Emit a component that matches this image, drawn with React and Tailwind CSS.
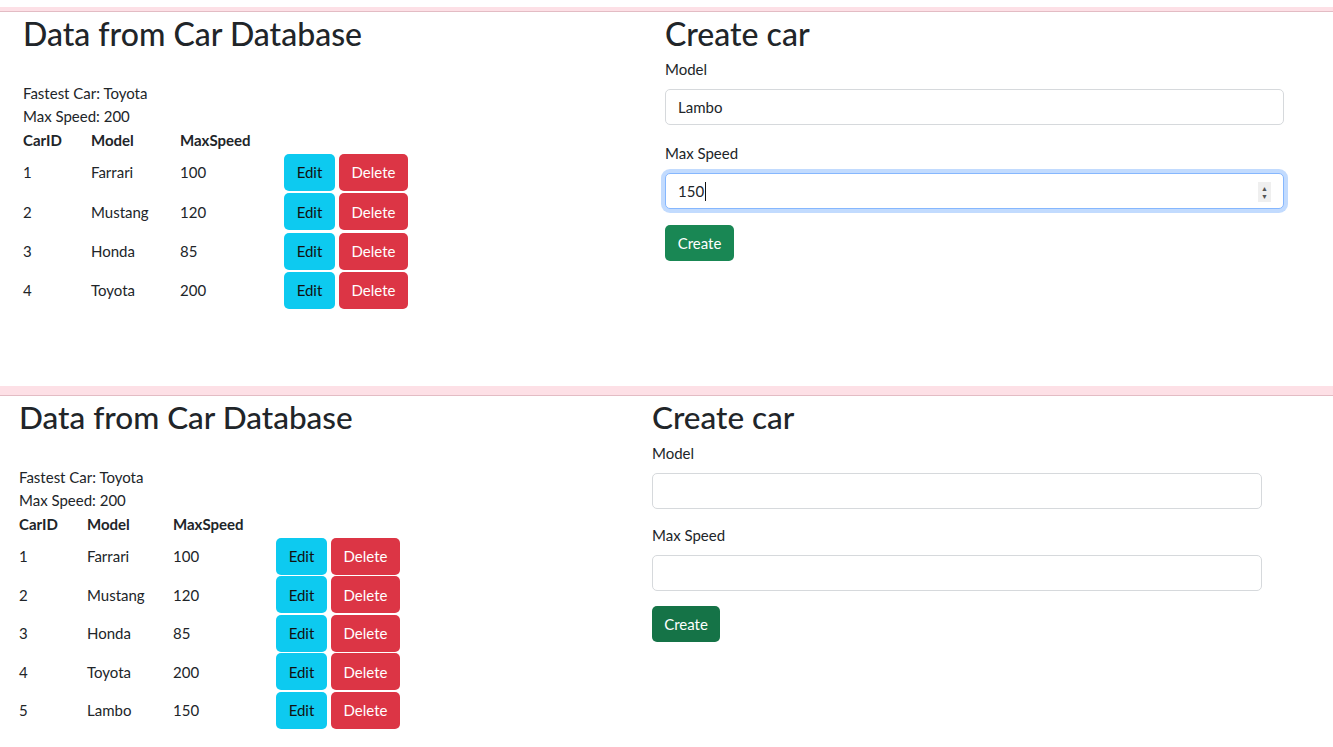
import React from "react";

const FONT = "font-['Lato','Liberation_Sans',sans-serif]";

const baseCars = [
  { id: 1, model: "Farrari", maxSpeed: 100 },
  { id: 2, model: "Mustang", maxSpeed: 120 },
  { id: 3, model: "Honda", maxSpeed: 85 },
  { id: 4, model: "Toyota", maxSpeed: 200 },
];

const layouts = {
  before: {
    section: "h-[386px] pt-[7px]",
    band: "h-[5px]",
    left: "w-[665px] pl-[23px]",
    right: "w-[620px]",
    title: "text-[32px]",
    cols: "grid-cols-[68px_89px_104px_auto]",
    row: "h-[39.3px]",
    fields: "gap-[17px]",
    input: "w-[619px]",
    create: "bg-[#198754] w-[69px] mt-[16px]",
  },
  after: {
    section: "h-[361px] pt-0",
    band: "h-[10px]",
    left: "w-[652px] pl-[19px]",
    right: "w-[611px]",
    title: "text-[31.5px]",
    cols: "grid-cols-[68px_86px_103px_auto]",
    row: "h-[38.5px]",
    fields: "gap-[15px]",
    input: "w-[610px]",
    create: "bg-[#157347] w-[68px] mt-[15px]",
  },
};

function Field({ label, value, focused, className }) {
  return (
    <div>
      <label className="block text-[15px] leading-[23px] text-[#212529]">{label}</label>
      {focused ? (
        <div
          className={`relative mt-[8px] h-[36px] rounded-[5px] border border-[#86b7fe] bg-white px-[12px] flex items-center text-[15px] text-[#212529] shadow-[0_0_0_4px_rgba(13,110,253,0.25)] ${className}`}
        >
          <span>{value}</span>
          <span className="ml-px inline-block h-[19px] w-px bg-[#111]" />
          <span className="absolute right-[12px] top-[8px] flex h-[20px] w-[13px] flex-col items-center justify-center bg-[#efefef] text-[7px] leading-[8px] text-[#555]">
            <span>▲</span>
            <span>▼</span>
          </span>
        </div>
      ) : (
        <input
          readOnly
          value={value}
          className={`mt-[8px] block h-[36px] rounded-[5px] border border-[#d6d9dc] bg-white px-[12px] text-[15px] text-[#212529] outline-none ${className}`}
        />
      )}
    </div>
  );
}

function CarSection({ cars, model, speed, focused, layout }) {
  const l = layouts[layout];
  return (
    <section className={`${l.section} bg-white`}>
      <div className={`${l.band} bg-[#fde0e6] border-b border-[#e3bcc4]`} />
      <div className="flex">
        {/* table side */}
        <div className={l.left}>
          <h2 className={`mt-[3px] ${l.title} leading-[37px] font-medium text-[#212529]`}>
            Data from Car Database
          </h2>
          <div className="mt-[30px] text-[15px] leading-[23px] text-[#212529]">
            <p>Fastest Car: Toyota</p>
            <p>Max Speed: 200</p>
          </div>
          <div className={`grid ${l.cols} text-[15px] text-[#212529]`}>
            <div className="h-[25px] flex items-center font-bold">CarID</div>
            <div className="h-[25px] flex items-center font-bold">Model</div>
            <div className="h-[25px] flex items-center font-bold">MaxSpeed</div>
            <div />
            {cars.map((car) => (
              <React.Fragment key={car.id}>
                <div className={`${l.row} flex items-center`}>{car.id}</div>
                <div className={`${l.row} flex items-center`}>{car.model}</div>
                <div className={`${l.row} flex items-center`}>{car.maxSpeed}</div>
                <div className={`${l.row} flex items-center gap-[4px]`}>
                  <button className="h-[37px] w-[51px] rounded-[5px] bg-[#0dcaf0] text-[15px] text-[#111]">
                    Edit
                  </button>
                  <button className="h-[37px] w-[69px] rounded-[5px] bg-[#dc3545] text-[15px] text-white">
                    Delete
                  </button>
                </div>
              </React.Fragment>
            ))}
          </div>
        </div>

        {/* form side */}
        <div className={l.right}>
          <h2 className={`mt-[3px] ${l.title} leading-[37px] font-medium text-[#212529]`}>Create car</h2>
          <div className={`mt-[6px] flex flex-col ${l.fields}`}>
            <Field label="Model" value={model} className={l.input} />
            <Field label="Max Speed" value={speed} focused={focused} className={l.input} />
          </div>
          <button className={`h-[36px] rounded-[5px] text-[15px] text-white ${l.create}`}>
            Create
          </button>
        </div>
      </div>
    </section>
  );
}

export default function App() {
  const after = [...baseCars, { id: 5, model: "Lambo", maxSpeed: 150 }];
  return (
    <div className={`w-[1333px] h-[747px] overflow-hidden bg-white ${FONT}`}>
      <CarSection layout="before" cars={baseCars} model="Lambo" speed="150" focused />
      <CarSection layout="after" cars={after} model="" speed="" />
    </div>
  );
}
